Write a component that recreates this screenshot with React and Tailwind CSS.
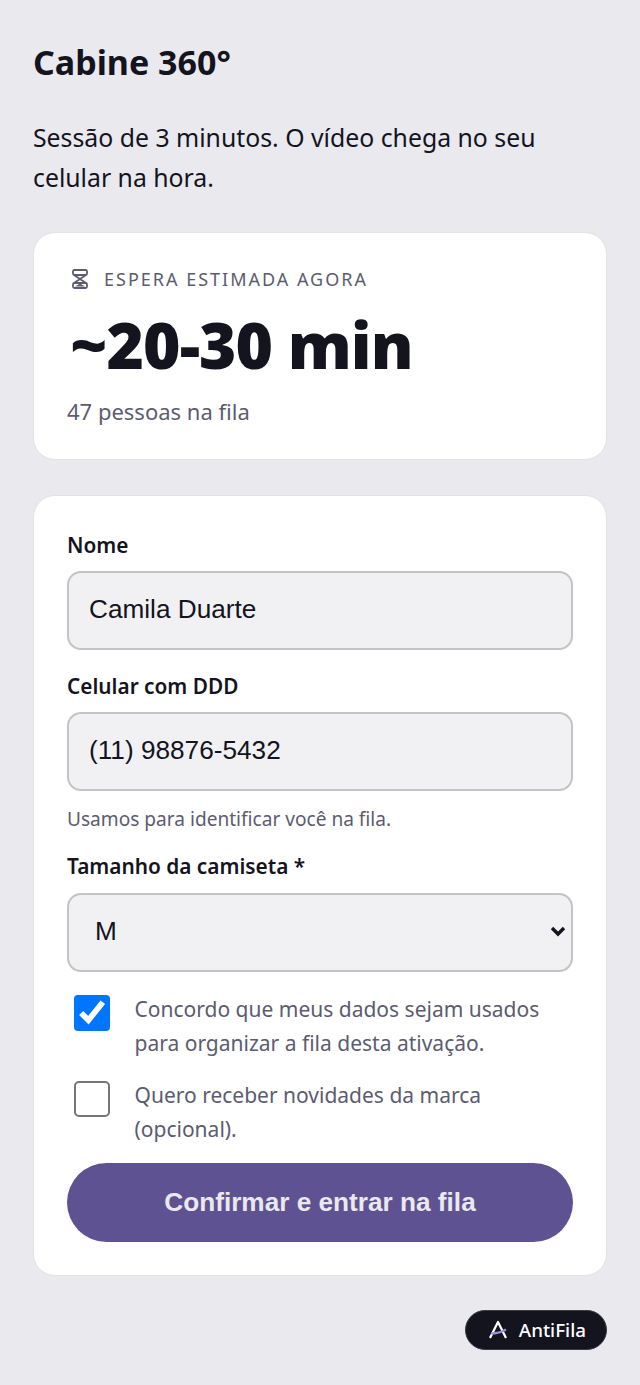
const sans = { fontFamily: '"Noto Sans", sans-serif' };

const inputClass = 'block w-full h-[79px] px-5 pb-[2px] bg-[#f1f1f4] border-2 border-[#c4c4c7] rounded-[14px] text-[26.2px] text-[#14141f] outline-none font-["Liberation_Sans",sans-serif]';

function Field({ label, children, hint }) {
  return (
    <div>
      <label className="block text-[20.8px] leading-[30px] font-semibold text-[#14141f] mb-[11px]">{label}</label>
      {children}
      {hint && <p className="mt-[13px] text-[19.1px] leading-[30px] text-[#5c5c70]">{hint}</p>}
    </div>
  );
}

function HourglassIcon() {
  return (
    <svg width="16" height="22" viewBox="0 0 16 22" fill="none" stroke="currentColor" strokeWidth="1.8" strokeLinejoin="round" className="ml-[5px]">
      <rect x="1" y="2" width="14" height="5" rx="1.4" />
      <rect x="1" y="15" width="14" height="5" rx="1.4" />
      <path d="M2 7 L14 15 M14 7 L2 15" />
      <path d="M3 18.5 L8 15.5 L13 18.5 Z" fill="currentColor" stroke="none" />
    </svg>
  );
}

export default function App() {
  return (
    <div className="min-h-[1385px] bg-[#e9e9ee] px-[33px] pt-[39px]" style={sans}>
      <h1 className="text-[34px] leading-[46px] font-bold text-[#14141f]">Cabine 360°</h1>
      <p className="mt-[32px] max-w-[520px] text-[24.8px] leading-[40px] text-[#14141f]">Sessão de 3 minutos. O vídeo chega no seu celular na hora.</p>

      <section className="mt-[35px] bg-white border border-[#e2e2e7] rounded-[22px] px-[33px] pt-[31px] pb-[30px]">
        <div className="flex items-center gap-[16px] text-[#5c5c70]">
          <HourglassIcon />
          <span className="text-[18px] leading-[30px] tracking-[2px] uppercase">Espera estimada agora</span>
        </div>
        <div className="mt-[16px] ml-[3px] text-[64px] leading-[70px] font-black tracking-[-0.015em] text-[#14141f]">~20-30 min</div>
        <p className="mt-[13px] text-[22px] leading-[36px] text-[#5c5c70]">47 pessoas na fila</p>
      </section>

      <form className="mt-[35px] bg-white border border-[#e2e2e7] rounded-[22px] px-[33px] pt-[34px] pb-[33px]">
        <Field label="Nome">
          <input className={inputClass} defaultValue="Camila Duarte" />
        </Field>
        <div className="mt-[21px]">
          <Field label="Celular com DDD" hint="Usamos para identificar você na fila.">
            <input className={inputClass} defaultValue="(11) 98876-5432" />
          </Field>
        </div>
        <div className="mt-[17px]">
          <Field label="Tamanho da camiseta *">
            <div className="pt-px">
              <div className="relative">
                <select className="block w-full h-[79px] pl-[26px] pr-10 pb-[2px] appearance-none bg-[#f1f1f4] border-2 border-[#c4c4c7] rounded-[14px] text-[26.2px] text-[#14141f] outline-none font-['Liberation_Sans',sans-serif]" defaultValue="M">
                  <option>P</option>
                  <option>M</option>
                  <option>G</option>
                </select>
                <svg width="16" height="11" viewBox="0 0 16 11" fill="none" className="absolute right-[7px] top-[33px] pointer-events-none">
                  <path d="M2 2 L8 8 L14 2" stroke="#14141f" strokeWidth="3.4" />
                </svg>
              </div>
            </div>
          </Field>
        </div>
        <label className="mt-[21px] flex gap-[24.5px] pl-[7px]">
          <input type="checkbox" defaultChecked className="w-[18px] h-[18px] mt-px shrink-0 [zoom:2]" />
          <span className="text-[21px] leading-[33.5px] text-[#5c5c70]">Concordo que meus dados sejam usados para organizar a fila desta ativação.</span>
        </label>
        <label className="mt-[19px] flex gap-[24.5px] pl-[7px]">
          <input type="checkbox" className="w-[18px] h-[18px] mt-px shrink-0 [zoom:2]" />
          <span className="text-[21px] leading-[33.5px] text-[#5c5c70]">Quero receber novidades da marca (opcional).</span>
        </label>
        <button type="button" className="mt-[17px] w-full h-[79px] rounded-full bg-[#5f5292] text-[26.2px] font-bold text-[#e9e9ee] font-['Liberation_Sans',sans-serif]">
          Confirmar e entrar na fila
        </button>
      </form>

      <div className="mt-[34px] flex justify-end">
        <div className="flex items-center gap-[11px] h-[40px] pl-[22px] pr-[20px] rounded-full bg-[#14141f] border border-[#3a3a48] text-white text-[18.8px] font-medium">
          <svg width="20" height="20" viewBox="0 0 20 20" fill="none">
            <path d="M2 18 L10 2 L18 18" stroke="#fff" strokeWidth="2.2" strokeLinejoin="round" />
            <path d="M3 13.5 C8 13.5 13 12.5 18 9.5" stroke="#9d8fdc" strokeWidth="2.2" />
          </svg>
          AntiFila
        </div>
      </div>
    </div>
  );
}
